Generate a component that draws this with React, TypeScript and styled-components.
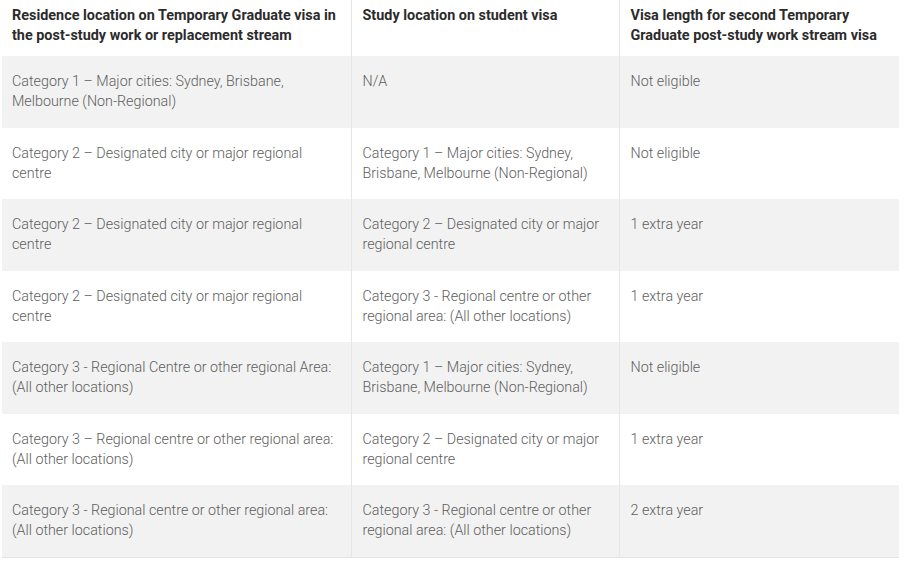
import React from "react";
import styled, { createGlobalStyle } from "styled-components";

const Global = createGlobalStyle`
  html, body { margin: 0; padding: 0; background: #ffffff; }
  body { font-family: Roboto, "Liberation Sans", Arial, sans-serif; }
`;

const Wrap = styled.div`
  padding: 0 5px 0 2px;
`;

const Table = styled.table`
  width: 897px;
  border-collapse: collapse;
  table-layout: fixed;
  border-bottom: 1px solid #e4e4e4;
`;

const HeadCell = styled.th<{ $first?: boolean }>`
  text-align: left;
  vertical-align: top;
  font-family: Roboto, "Liberation Sans", Arial, sans-serif;
  font-weight: 700;
  font-size: 14.4px;
  line-height: 20px;
  color: #2b2b2b;
  padding: 6px 10px 10px ${(p) => (p.$first ? "10px" : "11px")};
  border-left: ${(p) => (p.$first ? "none" : "1px solid #e6e6e6")};
`;

const Row = styled.tr<{ $shaded: boolean }>`
  background: ${(p) => (p.$shaded ? "#f2f2f2" : "#ffffff")};
`;

const Cell = styled.td<{ $first?: boolean }>`
  vertical-align: top;
  font-family: Roboto, "Liberation Sans", Arial, sans-serif;
  font-weight: 300;
  font-size: 14.3px;
  line-height: 20px;
  color: #5e5e5e;
  padding: 15px 10px 16.5px ${(p) => (p.$first ? "10px" : "11px")};
  border-left: ${(p) => (p.$first ? "none" : "1px solid #e6e6e6")};
`;

const rows: [string, string, string][] = [
  ["Category 1 – Major cities: Sydney, Brisbane, Melbourne (Non-Regional)", "N/A", "Not eligible"],
  ["Category 2 – Designated city or major regional centre", "Category 1 – Major cities: Sydney, Brisbane, Melbourne (Non-Regional)", "Not eligible"],
  ["Category 2 – Designated city or major regional centre", "Category 2 – Designated city or major regional centre", "1 extra year"],
  ["Category 2 – Designated city or major regional centre", "Category 3 - Regional centre or other regional area: (All other locations)", "1 extra year"],
  ["Category 3 - Regional Centre or other regional Area: (All other locations)", "Category 1 – Major cities: Sydney, Brisbane, Melbourne (Non-Regional)", "Not eligible"],
  ["Category 3 – Regional centre or other regional area: (All other locations)", "Category 2 – Designated city or major regional centre", "1 extra year"],
  ["Category 3 - Regional centre or other regional area: (All other locations)", "Category 3 - Regional centre or other regional area: (All other locations)", "2 extra year"],
];

export default function App() {
  return (
    <>
      <Global />
      <Wrap>
        <Table>
          <colgroup>
            <col style={{ width: 349 }} />
            <col style={{ width: 268 }} />
            <col style={{ width: 280 }} />
          </colgroup>
          <thead>
            <tr>
              <HeadCell $first>Residence location on Temporary Graduate visa in the post-study work or replacement stream</HeadCell>
              <HeadCell>Study location on student visa</HeadCell>
              <HeadCell>Visa length for second Temporary Graduate post-study work stream visa</HeadCell>
            </tr>
          </thead>
          <tbody>
            {rows.map((r, i) => (
              <Row key={i} $shaded={i % 2 === 0}>
                <Cell $first>{r[0]}</Cell>
                <Cell>{r[1]}</Cell>
                <Cell>{r[2]}</Cell>
              </Row>
            ))}
          </tbody>
        </Table>
      </Wrap>
    </>
  );
}
